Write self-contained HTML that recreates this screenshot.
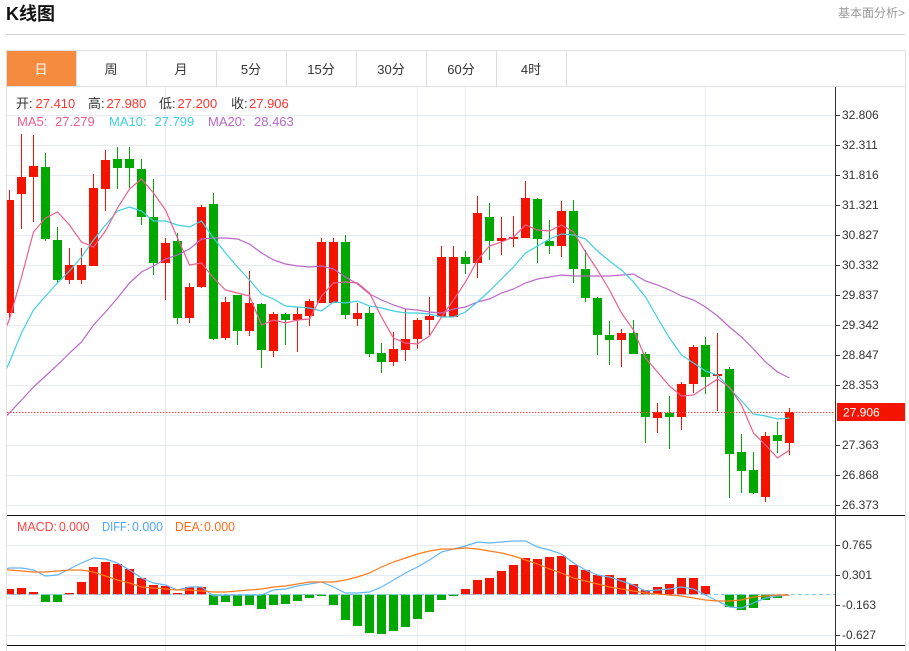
<!DOCTYPE html>
<html lang="zh">
<head>
<meta charset="utf-8">
<title>K线图</title>
<style>
html,body{margin:0;padding:0;background:#fff;width:909px;height:651px;overflow:hidden}
svg{display:block}
text{font-family:"Liberation Sans","Noto Sans CJK SC",sans-serif}
.ax text{font-size:12px;fill:#333}
.lg text{font-size:13px}
.tb text{font-size:13px;fill:#333;text-anchor:middle}
</style>
</head>
<body>
<svg width="909" height="651" viewBox="0 0 909 651" xmlns="http://www.w3.org/2000/svg">
<defs>
<clipPath id="m"><rect x="7" y="87" width="828" height="428"/></clipPath>
<clipPath id="b"><rect x="7" y="516" width="828" height="129"/></clipPath>
</defs>

<text x="6" y="20" font-size="18" font-weight="700" fill="#111">K线图</text>
<text x="838" y="17" font-size="12" fill="#999">基本面分析&gt;</text>
<path d="M6 34.5H905" stroke="#d2d2d2" fill="none"/>

<!-- box -->
<path d="M6.5 651V50.5H905.5V651M6 86.5H906" stroke="#e0e0e0" fill="none"/>
<rect x="7" y="51" width="69" height="35" fill="#f58b3f"/>
<path d="M76.5 51V86M146.5 51V86M216.5 51V86M286.5 51V86M356.5 51V86M426.5 51V86M496.5 51V86M566.5 51V86" stroke="#ddd" fill="none"/>
<g class="tb">
<text x="41" y="74" style="fill:#fff">日</text>
<text x="111" y="74">周</text>
<text x="181" y="74">月</text>
<text x="251" y="74">5分</text>
<text x="321" y="74">15分</text>
<text x="391" y="74">30分</text>
<text x="461" y="74">60分</text>
<text x="531" y="74">4时</text>
</g>

<!-- grid -->
<path d="M7 115.5H835M7 145.5H835M7 175.5H835M7 205.5H835M7 235.5H835M7 265.5H835M7 295.5H835M7 325.5H835M7 355.5H835M7 385.5H835M7 415.5H835M7 445.5H835M7 475.5H835M7 505.5H835M7 545.5H835M7 575.5H835M7 605.5H835M7 635.5H835M165.5 87V651M417.5 87V651M465.5 87V651M705.5 87V651" stroke="#e6ebf1" fill="none"/>

<!-- candles -->
<g clip-path="url(#m)">
<path stroke="#f31400" fill="none" d="M9.5 190V319M21.5 134V229M33.5 135V222M69.5 248V284M81.5 248V284M93.5 174V266M105.5 150V211M165.5 238V300M189.5 283V323M201.5 205V288M225.5 297V340M249.5 271V336M273.5 312V357M297.5 307V352M309.5 299V326M321.5 238V303M333.5 238V303M357.5 303V326M393.5 332V366M405.5 309V361M417.5 318V349M429.5 297V335M441.5 246V317M453.5 246V317M477.5 196V278M501.5 217V255M513.5 216V247M525.5 181V238M561.5 201V257M621.5 329V367M657.5 403V433M681.5 382V430M693.5 345V393M717.5 333V411M765.5 432V502M789.5 408V455"/>
<path fill="#f31400" d="M5 200h9V313H5zM17 177h9V194H17zM29 166h9V177H29zM65 265h9V280H65zM77 265h9V280H77zM89 188h9V266H89zM101 160h9V189H101zM161 243h9V263H161zM185 287h9V318H185zM197 207h9V287H197zM221 302h9V338H221zM245 303h9V331H245zM269 314h9V351H269zM293 314h9V320H293zM305 301h9V316H305zM317 242h9V303H317zM329 242h9V303H329zM353 313h9V319H353zM389 349h9V362H389zM401 339h9V350H401zM413 320h9V339H413zM425 316h9V320H425zM437 257h9V317H437zM449 257h9V317H449zM473 213h9V263H473zM497 238h9V241H497zM509 237h9V239H509zM521 198h9V238H521zM557 211h9V246H557zM617 333h9V340H617zM653 412h9V418H653zM677 384h9V417H677zM689 347h9V384H689zM713 374h9V376H713zM761 436h9V497H761zM785 412h9V443H785z"/>
<path stroke="#00a800" fill="none" d="M45.5 153V241M57.5 227V283M117.5 147V189M129.5 147V188M141.5 159V225M153.5 179V275M177.5 233V324M213.5 193V340M237.5 295V345M261.5 303V368M285.5 313V345M345.5 235V319M369.5 307V357M381.5 343V373M465.5 251V274M489.5 203V260M537.5 198V263M549.5 220V254M573.5 200V283M585.5 250V302M597.5 297V355M609.5 321V365M633.5 320V354M645.5 352V443M669.5 396V449M705.5 337V394M729.5 367V498M741.5 434V493M753.5 452V494M777.5 422V453"/>
<path fill="#00a800" d="M41 167h9V239H41zM53 240h9V280H53zM113 159h9V168H113zM125 159h9V168H125zM137 169h9V217H137zM149 217h9V263H149zM173 241h9V318H173zM209 204h9V339H209zM233 295h9V331H233zM257 304h9V350H257zM281 314h9V320H281zM341 242h9V315H341zM365 313h9V354H365zM377 353h9V362H377zM461 257h9V264H461zM485 217h9V241H485zM533 199h9V239H533zM545 241h9V246H545zM569 211h9V269H569zM581 269h9V298H581zM593 298h9V335H593zM605 335h9V340H605zM629 333h9V354H629zM641 354h9V417H641zM665 413h9V417H665zM701 345h9V377H701zM725 369h9V454H725zM737 452h9V471H737zM749 470h9V493H749zM773 435h9V441H773z"/>

<!-- MA20 -->
<polyline fill="none" stroke="#ba68c8" stroke-width="1.2" points="5,417 9.5,413 21.5,400 33.5,387 45.5,376 57.5,365 69.5,353 81.5,342 93.5,325 105.5,312 117.5,298 129.5,283 141.5,272 153.5,266 165.5,259 177.5,255 189.5,249 201.5,239 213.5,238 225.5,238 237.5,239 249.5,244 261.5,253 273.5,260 285.5,264 297.5,266 309.5,267 321.5,266 333.5,269 345.5,277 357.5,284 369.5,294 381.5,300 393.5,305 405.5,309 417.5,310 429.5,312 441.5,313 453.5,309 465.5,307 477.5,302 489.5,299 501.5,293 513.5,289 525.5,283 537.5,279 549.5,277 561.5,275 573.5,276 585.5,276 597.5,276 609.5,276 621.5,275 633.5,274 645.5,281 657.5,285 669.5,290 681.5,296 693.5,300 705.5,307 717.5,316 729.5,327 741.5,337 753.5,349 765.5,362 777.5,372 789.5,378"/>
<!-- MA10 -->
<polyline fill="none" stroke="#3fd0e2" stroke-width="1.2" points="5,372 9.5,362 21.5,333 33.5,310 45.5,296 57.5,283 69.5,271 81.5,257 93.5,240 105.5,225 117.5,211 129.5,207 141.5,211 153.5,221 165.5,221 177.5,225 189.5,227 201.5,221 213.5,238 225.5,253 237.5,267 249.5,280 261.5,294 273.5,299 285.5,306 297.5,307 309.5,308 321.5,311 333.5,302 345.5,303 357.5,301 369.5,306 381.5,308 393.5,311 405.5,313 417.5,313 429.5,314 441.5,317 453.5,317 465.5,312 477.5,302 489.5,291 501.5,279 513.5,267 525.5,253 537.5,246 549.5,239 561.5,234 573.5,235 585.5,239 597.5,251 609.5,261 621.5,270 633.5,282 645.5,297 657.5,318 669.5,338 681.5,355 693.5,363 705.5,371 717.5,375 729.5,388 741.5,401 753.5,414 765.5,416 777.5,419 789.5,418"/>
<!-- MA5 -->
<polyline fill="none" stroke="#ec5e93" stroke-width="1.2" points="5,330 9.5,319 21.5,277 33.5,232 45.5,218 57.5,212 69.5,225 81.5,242 93.5,247 105.5,231 117.5,208 129.5,189 141.5,179 153.5,193 165.5,210 177.5,238 189.5,265 201.5,263 213.5,278 225.5,290 237.5,293 249.5,296 261.5,325 273.5,320 285.5,323 297.5,320 309.5,319 321.5,296 333.5,283 345.5,282 357.5,283 369.5,293 381.5,317 393.5,338 405.5,343 417.5,344 429.5,336 441.5,317 453.5,300 465.5,282 477.5,260 489.5,246 501.5,242 513.5,237 525.5,225 537.5,230 549.5,231 561.5,225 573.5,232 585.5,252 597.5,270 609.5,290 621.5,313 633.5,330 645.5,358 657.5,372 669.5,386 681.5,396 693.5,395 705.5,387 717.5,379 729.5,387 741.5,405 753.5,433 765.5,445 777.5,458 789.5,450"/>
<path d="M7 412.5H835" stroke="#f44" stroke-dasharray="1.5 1.5" fill="none"/>
</g>

<!-- MACD -->
<g clip-path="url(#b)">
<path fill="#f31400" d="M5 589h9V594.5H5zM17 588h9V594.5H17zM29 592h9V594.5H29zM65 593h9V594.5H65zM77 582h9V594.5H77zM89 567h9V594.5H89zM101 562h9V594.5H101zM113 564h9V594.5H113zM125 569h9V594.5H125zM137 578h9V594.5H137zM149 585h9V594.5H149zM161 586h9V594.5H161zM173 593h9V594.5H173zM185 587h9V594.5H185zM197 587h9V594.5H197zM461 589h9V594.5H461zM473 580h9V594.5H473zM485 578h9V594.5H485zM497 571h9V594.5H497zM509 565h9V594.5H509zM521 558h9V594.5H521zM533 559h9V594.5H533zM545 557h9V594.5H545zM557 556h9V594.5H557zM569 565h9V594.5H569zM581 570h9V594.5H581zM593 575h9V594.5H593zM605 575h9V594.5H605zM617 578h9V594.5H617zM629 584h9V594.5H629zM641 590h9V594.5H641zM653 587h9V594.5H653zM665 584h9V594.5H665zM677 578h9V594.5H677zM689 578h9V594.5H689zM701 586h9V594.5H701z"/>
<path fill="#00a800" d="M41 594.5h9V602H41zM53 594.5h9V602H53zM209 594.5h9V605H209zM221 594.5h9V602H221zM233 594.5h9V606H233zM245 594.5h9V605H245zM257 594.5h9V609H257zM269 594.5h9V605H269zM281 594.5h9V604H281zM293 594.5h9V601H293zM305 594.5h9V598H305zM317 594.5h9V596H317zM329 594.5h9V605H329zM341 594.5h9V620H341zM353 594.5h9V626H353zM365 594.5h9V633H365zM377 594.5h9V634H377zM389 594.5h9V631H389zM401 594.5h9V627H401zM413 594.5h9V619H413zM425 594.5h9V612H425zM437 594.5h9V600H437zM449 594.5h9V596H449zM725 594.5h9V607H725zM737 594.5h9V610H737zM749 594.5h9V608H749zM761 594.5h9V600H761zM773 594.5h9V598H773z"/>
<path d="M7 594.5H835" stroke="#7fcdf2" stroke-dasharray="4 3" fill="none"/>
<polyline fill="none" stroke="#64b5f6" stroke-width="1.2" points="5,569 9.5,568 21.5,568 33.5,570 45.5,576 57.5,575 69.5,569 81.5,563 93.5,558 105.5,559 117.5,563 129.5,570 141.5,578 153.5,583 165.5,585 177.5,590 189.5,587 201.5,587 213.5,596 225.5,595 237.5,595 249.5,595 261.5,595 273.5,590 285.5,589 297.5,586 309.5,584 321.5,582 333.5,587 345.5,593 357.5,593 369.5,592 381.5,587 393.5,580 405.5,573 417.5,567 429.5,560 441.5,552 453.5,549 465.5,546 477.5,542 489.5,543 501.5,542 513.5,541 525.5,541 537.5,547 549.5,550 561.5,554 573.5,563 585.5,570 597.5,575 609.5,577 621.5,581 633.5,585 645.5,591 657.5,590 669.5,589 681.5,587 693.5,589 705.5,595 717.5,601 729.5,607 741.5,608 753.5,603 765.5,598 777.5,596 789.5,595"/>
<polyline fill="none" stroke="#ff7a1a" stroke-width="1.2" points="5,570 9.5,570 21.5,571 33.5,572 45.5,572 57.5,571 69.5,570 81.5,570 93.5,572 105.5,576 117.5,580 129.5,583 141.5,587 153.5,588 165.5,589 177.5,590 189.5,590 201.5,591 213.5,592 225.5,592 237.5,591 249.5,590 261.5,589 273.5,587 285.5,586 297.5,584 309.5,582 321.5,582 333.5,582 345.5,580 357.5,577 369.5,573 381.5,567 393.5,562 405.5,558 417.5,554 429.5,551 441.5,549 453.5,549 465.5,548 477.5,549 489.5,551 501.5,553 513.5,556 525.5,560 537.5,564 549.5,569 561.5,573 573.5,578 585.5,581 597.5,584 609.5,587 621.5,589 633.5,591 645.5,593 657.5,594 669.5,595 681.5,596 693.5,598 705.5,600 717.5,601 729.5,601 741.5,600 753.5,597 765.5,596 777.5,595 789.5,595"/>
</g>

<!-- axes -->
<path d="M7 515.5H905M7 645.5H905" stroke="#111" fill="none"/>
<path d="M835.5 87V651" stroke="#333" fill="none"/>
<path d="M835 115.5h5M835 145.5h5M835 175.5h5M835 205.5h5M835 235.5h5M835 265.5h5M835 295.5h5M835 325.5h5M835 355.5h5M835 385.5h5M835 445.5h5M835 475.5h5M835 505.5h5M835 545.5h5M835 575.5h5M835 605.5h5M835 635.5h5" stroke="#333" fill="none"/>
<g class="ax">
<text x="842" y="119">32.806</text>
<text x="842" y="149">32.311</text>
<text x="842" y="179">31.816</text>
<text x="842" y="209">31.321</text>
<text x="842" y="239">30.827</text>
<text x="842" y="269">30.332</text>
<text x="842" y="299">29.837</text>
<text x="842" y="329">29.342</text>
<text x="842" y="359">28.847</text>
<text x="842" y="389">28.353</text>
<text x="842" y="449">27.363</text>
<text x="842" y="479">26.868</text>
<text x="842" y="509">26.373</text>
<text x="842" y="549">0.765</text>
<text x="842" y="579">0.301</text>
<text x="842" y="609">-0.163</text>
<text x="842" y="639">-0.627</text>
</g>
<rect x="837" y="403" width="68" height="18" fill="#f31400"/>
<text x="843" y="416.500" font-size="12" fill="#fff">27.906</text>

<!-- legends -->
<g class="lg">
<text x="16" y="108" fill="#333">开:</text><text x="35.500" y="108" fill="#f33">27.410</text>
<text x="88" y="108" fill="#333">高:</text><text x="106.500" y="108" fill="#f33">27.980</text>
<text x="159" y="108" fill="#333">低:</text><text x="177.500" y="108" fill="#f33">27.200</text>
<text x="231" y="108" fill="#333">收:</text><text x="249" y="108" fill="#f33">27.906</text>
<text x="17" y="126" fill="#ec5e93">MA5:</text><text x="55" y="126" fill="#ec5e93">27.279</text>
<text x="109" y="126" fill="#3fd0e2">MA10:</text><text x="154.500" y="126" fill="#3fd0e2">27.799</text>
<text x="208" y="126" fill="#ba68c8">MA20:</text><text x="254" y="126" fill="#ba68c8">28.463</text>
<text x="17" y="531" fill="#f44" textLength="40" lengthAdjust="spacingAndGlyphs">MACD:</text><text x="59" y="531" fill="#f44" textLength="30.500" lengthAdjust="spacingAndGlyphs">0.000</text>
<text x="102" y="531" fill="#4fa8f5" textLength="28" lengthAdjust="spacingAndGlyphs">DIFF:</text><text x="132" y="531" fill="#4fa8f5" textLength="31" lengthAdjust="spacingAndGlyphs">0.000</text>
<text x="175" y="531" fill="#ff6d1a" textLength="28" lengthAdjust="spacingAndGlyphs">DEA:</text><text x="204" y="531" fill="#ff6d1a" textLength="31" lengthAdjust="spacingAndGlyphs">0.000</text>
</g>
</svg>
</body>
</html>
